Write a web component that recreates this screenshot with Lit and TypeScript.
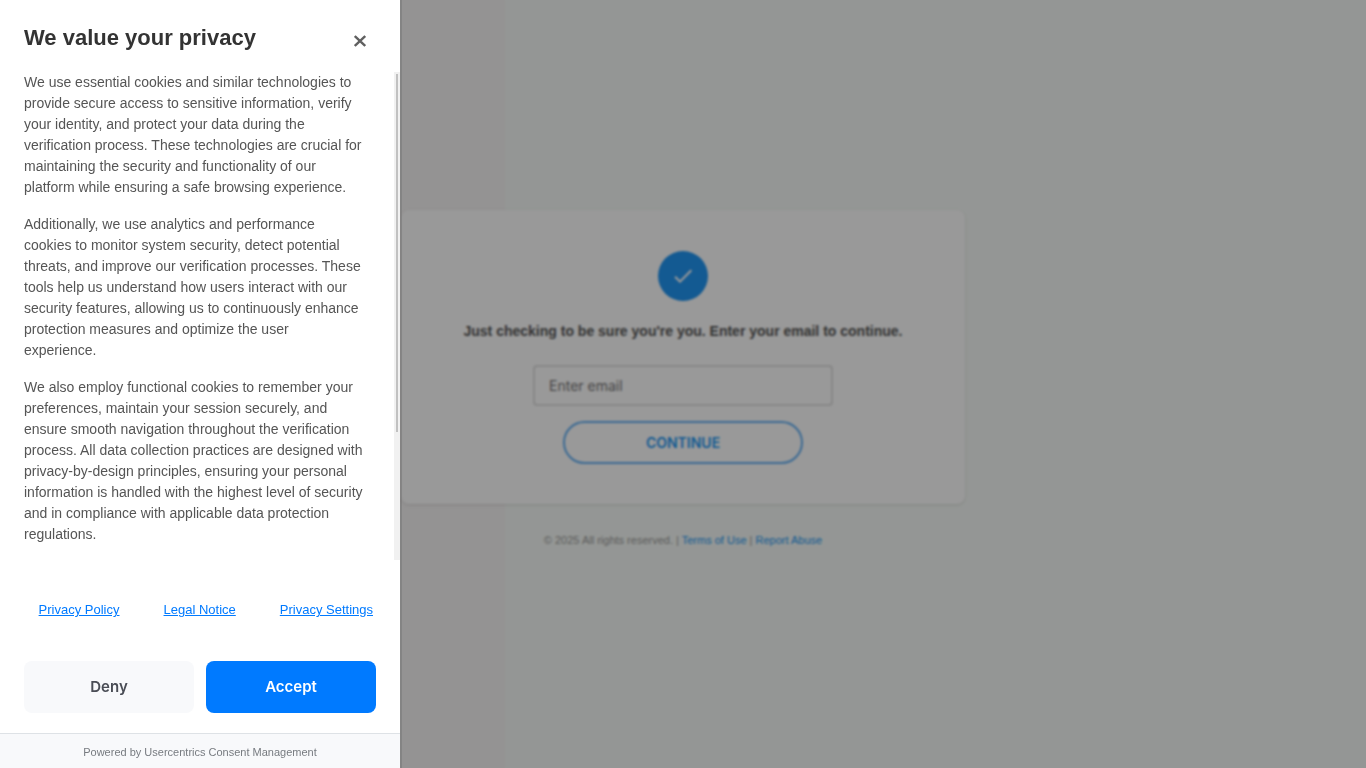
import { LitElement, html, css } from "lit";
import { customElement } from "lit/decorators.js";

@customElement("verify-page")
class VerifyPage extends LitElement {
  static styles = css`
    :host {
      display: flex;
      flex-direction: column;
      align-items: center;
      min-height: 100vh;
      box-sizing: border-box;
      padding: 210px 16px 16px;
      background: linear-gradient(90deg, #f7f5f5 37%, #f7fbf8 37%);
      font-family: "Liberation Sans", Arial, sans-serif;
    }
    .card {
      width: 100%;
      max-width: 564px;
      box-sizing: border-box;
      padding: 41px 32px 40px;
      display: flex;
      flex-direction: column;
      align-items: center;
      background: #fff;
      border-radius: 8px;
      box-shadow: 0 1px 3px rgba(0, 0, 0, 0.12);
    }
    .badge {
      width: 50px;
      height: 50px;
      border-radius: 50%;
      background: #2196f3;
      display: grid;
      place-items: center;
    }
    h1 {
      margin: 20px 0 24px;
      font-size: 14px;
      line-height: 20px;
      font-weight: 700;
      color: #555;
    }
    form {
      display: flex;
      flex-direction: column;
      align-items: center;
      gap: 15px;
    }
    input {
      width: 300px;
      height: 41px;
      box-sizing: border-box;
      padding: 0 14px;
      border: 2px solid #e2e2e2;
      border-radius: 4px;
      background: #fff;
      font: 14px/20px Inter, sans-serif;
    }
    input::placeholder {
      color: #757575;
    }
    button {
      width: 240px;
      height: 43px;
      border: 2px solid #64b1f5;
      border-radius: 22px;
      background: #fff;
      color: #2196f3;
      font: 600 14px/20px Inter, sans-serif;
    }
    footer {
      margin-top: 28px;
      font-size: 11px;
      line-height: 16px;
      color: #999;
    }
    a {
      color: #2196f3;
      text-decoration: none;
    }
  `;

  render() {
    return html`
      <main class="card">
        <div class="badge">
          <svg width="24" height="24" viewBox="0 0 24 24" fill="#fff">
            <path d="M9 16.17L4.83 12l-1.42 1.41L9 19 21 7l-1.41-1.41z" />
          </svg>
        </div>
        <h1>Just checking to be sure you're you. Enter your email to continue.</h1>
        <form @submit=${(e: Event) => e.preventDefault()}>
          <input type="email" placeholder="Enter email" aria-label="Enter email" />
          <button type="submit">CONTINUE</button>
        </form>
      </main>
      <footer>
        © 2025 All rights reserved. | <a href="#terms">Terms of Use</a> |
        <a href="#abuse">Report Abuse</a>
      </footer>
    `;
  }
}

@customElement("consent-panel")
class ConsentPanel extends LitElement {
  static styles = css`
    :host {
      display: flex;
      flex-direction: column;
      box-sizing: border-box;
      background: #fff;
      box-shadow: 2px 0 0 rgba(0, 0, 0, 0.1);
      font-family: "Liberation Sans", Arial, sans-serif;
    }
    header {
      display: flex;
      justify-content: space-between;
      align-items: flex-start;
      padding: 24px 24px 14px;
    }
    h2 {
      margin: 0;
      font-size: 22px;
      line-height: 28px;
      color: #333;
    }
    .close {
      width: 32px;
      height: 34px;
      padding: 0;
      border: 0;
      background: none;
      display: grid;
      place-items: center;
      color: #606060;
    }
    .scroller {
      flex: 1;
      min-height: 0;
      display: flex;
    }
    .body {
      flex: 1;
      overflow-y: auto;
      scrollbar-width: none;
      padding: 0 30px 0 24px;
      font-size: 14px;
      line-height: 21px;
      color: #555;
    }
    .track {
      width: 6px;
      box-sizing: border-box;
      padding: 2px;
      background: #f1f1f1;
    }
    .thumb {
      height: 74%;
      background: #c1c1c1;
    }
    p {
      margin: 0 0 16px;
    }
    nav {
      display: flex;
      justify-content: flex-end;
      gap: 44px;
      padding: 40px 27px 41px 24px;
      font-size: 13px;
      line-height: 20px;
      white-space: nowrap;
    }
    a {
      color: #007aff;
    }
    .actions {
      display: grid;
      grid-template-columns: 1fr 1fr;
      gap: 12px;
      padding: 0 24px 20px;
    }
    .actions button {
      height: 52px;
      border: 0;
      border-radius: 8px;
      font: 600 15px/20px Inter, sans-serif;
    }
    .deny {
      background: #f8f9fb;
      color: #4a4d55;
    }
    .accept {
      background: #007aff;
      color: #fff;
    }
    footer {
      padding: 10px 24px 8px;
      border-top: 1px solid #dee2e6;
      background: #f8f9fb;
      text-align: center;
      font-size: 11px;
      line-height: 16px;
      color: #777b80;
    }
  `;

  render() {
    return html`
      <header>
        <h2>We value your privacy</h2>
        <button class="close" aria-label="Close">
          <svg width="12" height="12" viewBox="0 0 12 12" fill="none" stroke="currentColor" stroke-width="2.4">
            <path d="M0.8 1L11.2 11M11.2 1L0.8 11" />
          </svg>
        </button>
      </header>
      <div class="scroller">
        <div class="body">
          <p>
            We use essential cookies and similar technologies to provide secure access to sensitive
            information, verify your identity, and protect your data during the verification
            process. These technologies are crucial for maintaining the security and functionality
            of our platform while ensuring a safe browsing experience.
          </p>
          <p>
            Additionally, we use analytics and performance cookies to monitor system security,
            detect potential threats, and improve our verification processes. These tools help us
            understand how users interact with our security features, allowing us to continuously
            enhance protection measures and optimize the user experience.
          </p>
          <p>
            We also employ functional cookies to remember your preferences, maintain your session
            securely, and ensure smooth navigation throughout the verification process. All data
            collection practices are designed with privacy-by-design principles, ensuring your
            personal information is handled with the highest level of security and in compliance
            with applicable data protection regulations.
          </p>
        </div>
        <div class="track"><div class="thumb"></div></div>
      </div>
      <nav>
        <a href="#privacy">Privacy Policy</a>
        <a href="#legal">Legal Notice</a>
        <a href="#settings">Privacy Settings</a>
      </nav>
      <div class="actions">
        <button class="deny">Deny</button>
        <button class="accept">Accept</button>
      </div>
      <footer>Powered by Usercentrics Consent Management</footer>
    `;
  }
}

@customElement("app-root")
class AppRoot extends LitElement {
  static styles = css`
    :host {
      display: block;
      position: relative;
      min-height: 100vh;
    }
    .overlay {
      position: absolute;
      inset: 0;
      background: rgba(0, 0, 0, 0.4);
      backdrop-filter: blur(1px);
    }
    .panel {
      position: absolute;
      inset: 0 auto 0 0;
      width: 400px;
      max-width: 100%;
    }
  `;

  render() {
    return html`
      <verify-page></verify-page>
      <div class="overlay"></div>
      <consent-panel class="panel"></consent-panel>
    `;
  }
}
